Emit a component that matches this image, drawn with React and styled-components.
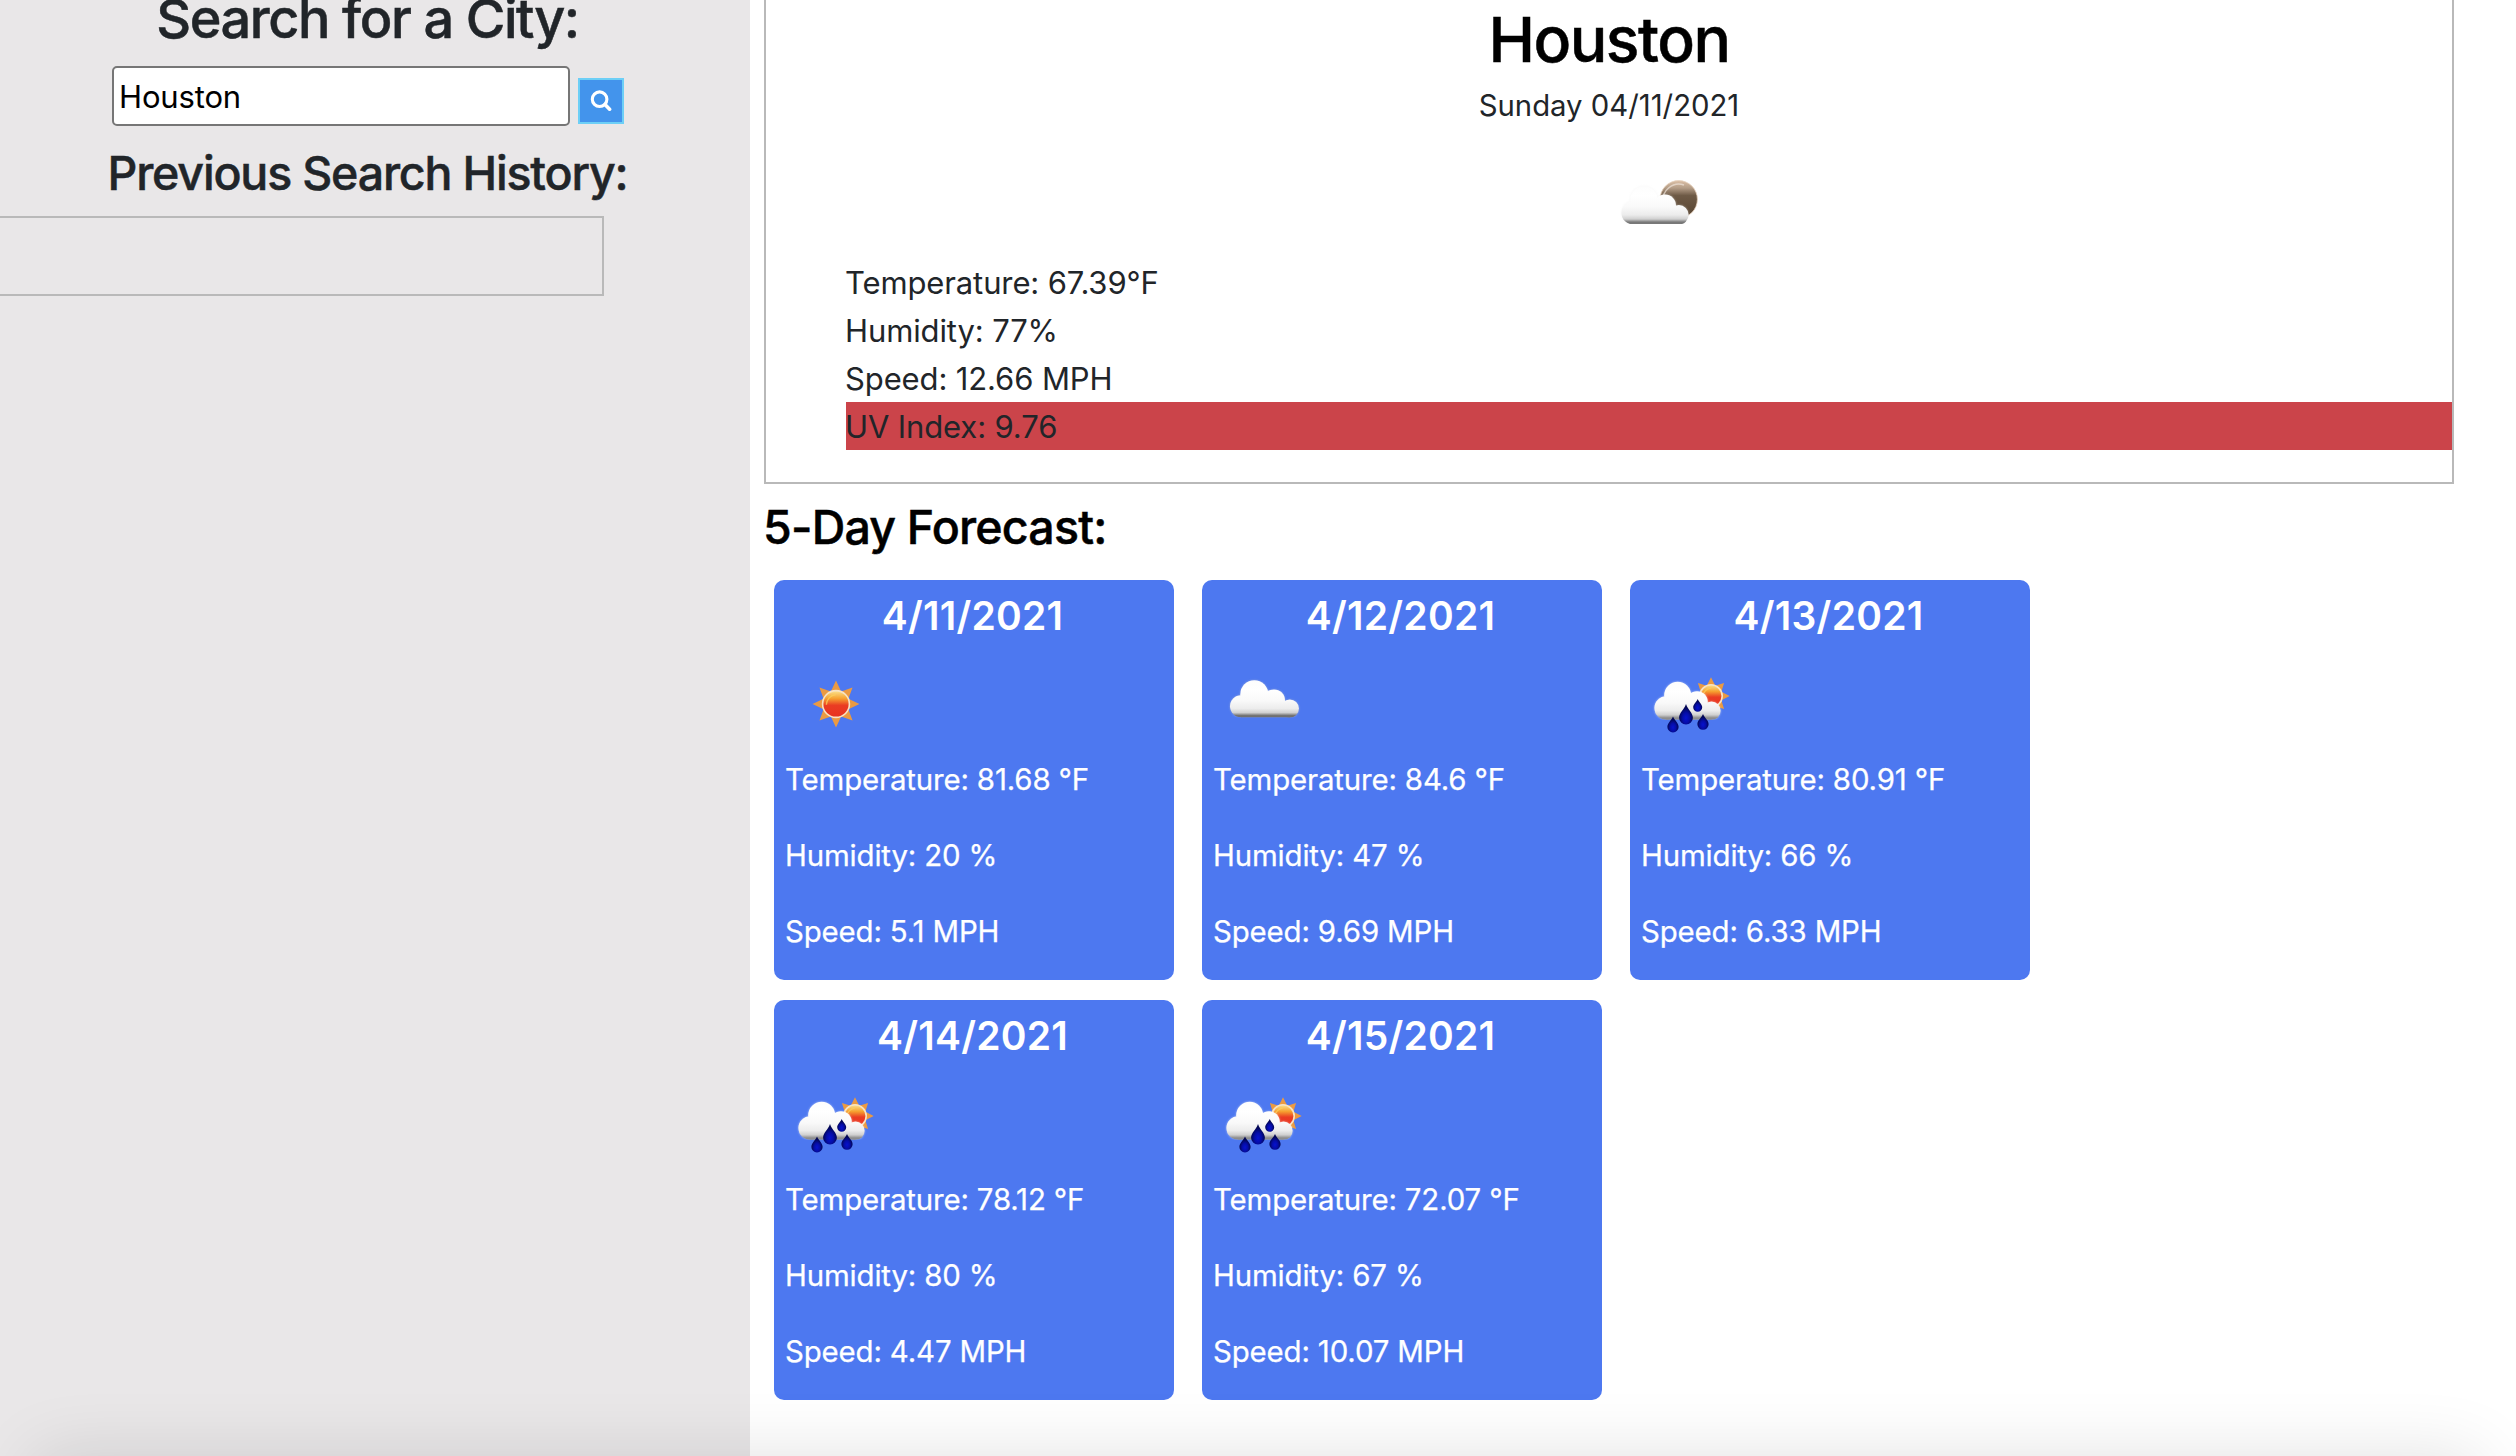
import React, { useId } from "react";
import styled, { createGlobalStyle } from "styled-components";

const GlobalStyle = createGlobalStyle`
  *, *::before, *::after { box-sizing: border-box; }
  body {
    margin: 0;
    background: #fff;
    color: #212529;
    font-family: Inter, "Liberation Sans", sans-serif;
    -webkit-font-smoothing: antialiased;
  }
  h1, h2, h3, p, ul { margin: 0; padding: 0; }
  h1, h2 { -webkit-text-stroke: 0.5px currentColor; }
  ul { list-style: none; }
`;

const Page = styled.div`
  position: relative;
  display: flex;
  width: 100%;
  height: 1456px;
  overflow: hidden;
`;

const Sidebar = styled.aside`
  flex: 0 0 750px;
  display: flex;
  flex-direction: column;
  align-items: center;
  padding-right: 14px;
  background: #e9e7e8;
`;

const SidebarTitle = styled.h1`
  font-size: ${(p) => p.$size}px;
  line-height: ${(p) => p.$line}px;
  letter-spacing: ${(p) => p.$tracking}px;
  margin: 0 1px ${(p) => p.$gap}px 0;
  font-weight: 500;
  white-space: nowrap;
`;

const SearchForm = styled.form`
  display: flex;
  align-items: flex-end;
  gap: 8px;
  margin-bottom: 19px;
`;

const SearchInput = styled.input`
  width: 458px;
  height: 60px;
  padding: 2px 5px;
  border: 2px solid #767676;
  border-radius: 5px;
  background: #fff;
  color: #000;
  font: 400 31px/48px Inter, "Liberation Sans", sans-serif;
  letter-spacing: -0.15px;
  outline: none;
`;

const SearchButton = styled.button`
  display: flex;
  align-items: center;
  justify-content: center;
  width: 46px;
  height: 46px;
  margin-bottom: 2px;
  padding: 0;
  border: 2px solid #6dcff6;
  background: #4394ec;
  color: #fff;
`;

const History = styled.div`
  align-self: flex-start;
  width: 604px;
  height: 80px;
  border: 2px solid #b9b9b9;
  border-left: 0;
`;

const Main = styled.main`
  flex: 1;
  padding-left: 14px;
`;

const Current = styled.section`
  width: 1690px;
  height: 484px;
  border: 2px solid #b9b9b9;
  border-top: 0;
`;

const CityName = styled.h1`
  color: #000;
  font-size: 62.5px;
  line-height: 79px;
  font-weight: 500;
  letter-spacing: -1.5px;
  text-align: center;
`;

const Today = styled.p`
  margin-top: 4px;
  font-size: 29.3px;
  line-height: 45px;
  letter-spacing: 0;
  text-align: center;
`;

const CurrentIcon = styled.div`
  height: 100px;
  margin: 26px 0 4px 50%;
`;

const Readings = styled.ul`
  margin-left: 80px;
`;

const Reading = styled.li`
  height: 48px;
  font-size: 31px;
  line-height: 49px;
  letter-spacing: -0.12px;
  text-indent: -1px;
  background: ${(p) => (p.$severe ? "#cb444a" : "transparent")};
`;

const ForecastTitle = styled.h2`
  margin: 14px 0 24px;
  color: #000;
  font-size: 46.5px;
  line-height: 58px;
  font-weight: 500;
  letter-spacing: -0.8px;
  text-indent: -1px;
`;

const Forecast = styled.div`
  display: grid;
  grid-template-columns: repeat(3, 400px);
  gap: 20px 28px;
  padding-left: 10px;
`;

const DayCard = styled.article`
  height: 400px;
  padding: 12px;
  border-radius: 10px;
  background: #4d78f0;
  color: #fff;
`;

const DayDate = styled.h3`
  margin: 0 3px 14px 0;
  font-size: 39px;
  line-height: 48px;
  font-weight: 600;
  letter-spacing: 0.25px;
  text-align: center;
`;

const DayStat = styled.p`
  margin: 3.5px 0 32px;
  font-size: 29.4px;
  line-height: 44px;
  letter-spacing: -0.14px;
  font-weight: 400;
  text-indent: -1px;
  -webkit-text-stroke: 0.25px currentColor;

  & + & { margin-top: 0; }
`;

const Picture = styled.svg`
  display: block;
  width: 100px;
  height: 100px;
`;

const BottomShade = styled.div`
  position: absolute;
  top: 100%;
  left: 36px;
  right: 36px;
  height: 200px;
  box-shadow: 0 0 70px rgba(0, 0, 0, 0.12);
  pointer-events: none;
`;

function SearchIcon() {
  return (
    <svg width="22" height="22" viewBox="0 0 22 22" fill="none" stroke="currentColor" aria-hidden="true">
      <circle cx="9.6" cy="9.2" r="7.3" strokeWidth="3.1" />
      <path d="M15 14.6l4.6 4.6" strokeWidth="3.6" strokeLinecap="round" />
    </svg>
  );
}

function sunRays(cx, cy, outer, diagonal, inner) {
  const points = [];
  for (let i = 0; i < 16; i++) {
    const angle = (i * Math.PI) / 8;
    const r = i % 2 ? inner : i % 4 ? diagonal : outer;
    points.push(`${cx + r * Math.sin(angle)},${cy - r * Math.cos(angle)}`);
  }
  return points.join(" ");
}

function Sun({ cx, cy, r, outer, diagonal, id }) {
  return (
    <>
      <linearGradient id={`${id}-sun`} x1="0" y1="0" x2="0" y2="1">
        <stop offset="0.02" stopColor="#fbe08a" />
        <stop offset="0.3" stopColor="#f6a030" />
        <stop offset="0.55" stopColor="#ea3c23" />
        <stop offset="1" stopColor="#e8321f" />
      </linearGradient>
      <polygon points={sunRays(cx, cy, outer, diagonal, r)} fill="#eb9a42" />
      <circle cx={cx} cy={cy} r={r} fill={`url(#${id}-sun)`} stroke="#f8e3c4" strokeWidth="1.6" />
      <path
        d={`M${cx - r * 0.72} ${cy + r * 0.05}a${r * 0.78} ${r * 0.78} 0 0 1 ${r * 0.7} ${-r * 0.75}`}
        fill="none"
        stroke="#fbd25c"
        strokeWidth="1.4"
        opacity="0.75"
      />
    </>
  );
}

function Cloud({ lobes, bottom, id, edge, halo }) {
  const [left] = lobes;
  const right = lobes[lobes.length - 1];
  const top = Math.min(...lobes.map(([, y, r]) => y - r));
  const shape = (
    <>
      {lobes.map(([x, y, r]) => (
        <circle key={x} cx={x} cy={y} r={r} />
      ))}
      <rect x={left[0]} y={left[1] - 5} width={right[0] - left[0]} height={bottom - left[1] + 5} />
    </>
  );
  return (
    <>
      <linearGradient id={`${id}-cloud`} gradientUnits="userSpaceOnUse" x1="0" y1={top} x2="0" y2={bottom}>
        <stop offset="0" stopColor="#fdfdfd" />
        <stop offset="0.25" stopColor="#ffffff" />
        <stop offset="0.55" stopColor="#f9f9f9" />
        <stop offset="0.76" stopColor="#ececec" />
        <stop offset="0.87" stopColor="#d0d0d0" />
        <stop offset="0.95" stopColor={edge} />
        <stop offset="1" stopColor={edge} />
      </linearGradient>
      <clipPath id={`${id}-clip`}>
        <rect x="0" y="0" width="100" height={bottom} />
      </clipPath>
      <filter id={`${id}-soft`} x="-10%" y="-10%" width="120%" height="120%">
        <feGaussianBlur stdDeviation="0.9" />
      </filter>
      <g clipPath={`url(#${id}-clip)`}>
        <g fill={halo} opacity="0.5" filter={`url(#${id}-soft)`}>{shape}</g>
        <g fill={`url(#${id}-cloud)`}>{shape}</g>
      </g>
    </>
  );
}

function Drop({ x, top, bottom, r, id }) {
  const cy = bottom - r;
  return (
    <path
      d={`M${x} ${top}C${x + r * 0.3} ${cy - r * 1.1} ${x + r} ${cy - r * 0.7} ${x + r} ${cy}A${r} ${r} 0 0 1 ${x - r} ${cy}C${x - r} ${cy - r * 0.7} ${x - r * 0.3} ${cy - r * 1.1} ${x} ${top}Z`}
      fill={`url(#${id}-drop)`}
    />
  );
}

function WeatherIcon({ kind }) {
  const id = useId().replace(/[^a-zA-Z0-9]/g, "");
  return (
    <Picture viewBox="0 0 100 100" aria-hidden="true">
      {kind === "clear" && <Sun id={id} cx={50} cy={50} r={13.4} outer={23.5} diagonal={23.4} />}
      {kind === "clouds" && (
        <Cloud
          id={id}
          edge="#707070"
          halo="#ccc"
          bottom={63.5}
          lobes={[[27, 52.2, 11], [40.3, 40.2, 14], [60, 46.4, 11], [75.7, 54.6, 9.2]]}
        />
      )}
      {kind === "night" && (
        <>
          <linearGradient id={`${id}-moon`} x1="0" y1="0" x2="0" y2="1">
            <stop offset="0" stopColor="#dcc0a6" />
            <stop offset="0.2" stopColor="#b39c86" />
            <stop offset="0.4" stopColor="#6e5a46" />
            <stop offset="1" stopColor="#55422f" />
          </linearGradient>
          <circle cx="69.7" cy="45.3" r="18.7" fill={`url(#${id}-moon)`} stroke="#e6d0bc" strokeWidth="0.8" />
          <path d="M54 48a16 16 0 0 1 21-17" fill="none" stroke="#efe4da" strokeWidth="1.5" opacity="0.7" />
          <Cloud
            id={id}
            edge="#787878"
            halo="#eee"
            bottom={70}
            lobes={[[24, 58.8, 11.6], [35, 46, 13.8], [56, 51.5, 11], [69.9, 60.8, 9.7]]}
          />
        </>
      )}
      {kind === "rain" && (
        <>
          <radialGradient id={`${id}-drop`} cx="0.5" cy="0.68" r="0.5">
            <stop offset="0" stopColor="#0712cf" />
            <stop offset="0.5" stopColor="#050da8" />
            <stop offset="1" stopColor="#020654" />
          </radialGradient>
          <Sun id={id} cx={69} cy={42} r={11.2} outer={18.7} diagonal={18.5} />
          <Cloud
            id={id}
            edge="#8d8d8d"
            halo="#fff"
            bottom={65.8}
            lobes={[[24.2, 54, 11.8], [35.7, 41.3, 13.5], [55, 48, 10.8], [69.5, 56.7, 9.1]]}
          />
          <Drop id={id} x={31} top={62.5} bottom={78.5} r={5.6} />
          <Drop id={id} x={44} top={50} bottom={70.6} r={6.9} />
          <Drop id={id} x={55.7} top={45} bottom={57.8} r={4.5} />
          <Drop id={id} x={61} top={60} bottom={75.8} r={5.6} />
        </>
      )}
    </Picture>
  );
}

const readings = [
  { text: "Temperature: 67.39°F" },
  { text: "Humidity: 77%" },
  { text: "Speed: 12.66 MPH" },
  { text: "UV Index: 9.76", severe: true },
];

const days = [
  { date: "4/11/2021", kind: "clear", temp: "81.68", humidity: 20, speed: "5.1" },
  { date: "4/12/2021", kind: "clouds", temp: "84.6", humidity: 47, speed: "9.69" },
  { date: "4/13/2021", kind: "rain", temp: "80.91", humidity: 66, speed: "6.33" },
  { date: "4/14/2021", kind: "rain", temp: "78.12", humidity: 80, speed: "4.47" },
  { date: "4/15/2021", kind: "rain", temp: "72.07", humidity: 67, speed: "10.07" },
];

export default function App() {
  return (
    <>
      <GlobalStyle />
      <Page>
        <Sidebar>
          <SidebarTitle $size={54} $line={37} $gap={29} $tracking={-1.4}>Search for a City:</SidebarTitle>
          <SearchForm onSubmit={(e) => e.preventDefault()}>
            <SearchInput defaultValue="Houston" aria-label="City" />
            <SearchButton aria-label="Search"><SearchIcon /></SearchButton>
          </SearchForm>
          <SidebarTitle as="h2" $size={46.5} $line={56} $gap={15} $tracking={-1.18}>
            Previous Search History:
          </SidebarTitle>
          <History />
        </Sidebar>
        <Main>
          <Current>
            <CityName>Houston</CityName>
            <Today>Sunday 04/11/2021</Today>
            <CurrentIcon><WeatherIcon kind="night" /></CurrentIcon>
            <Readings>
              {readings.map((r) => (
                <Reading key={r.text} $severe={r.severe}>{r.text}</Reading>
              ))}
            </Readings>
          </Current>
          <ForecastTitle>5-Day Forecast:</ForecastTitle>
          <Forecast>
            {days.map((d) => (
              <DayCard key={d.date}>
                <DayDate>{d.date}</DayDate>
                <WeatherIcon kind={d.kind} />
                <DayStat>{`Temperature: ${d.temp} °F`}</DayStat>
                <DayStat>{`Humidity: ${d.humidity} %`}</DayStat>
                <DayStat>{`Speed: ${d.speed} MPH`}</DayStat>
              </DayCard>
            ))}
          </Forecast>
        </Main>
        <BottomShade />
      </Page>
    </>
  );
}
